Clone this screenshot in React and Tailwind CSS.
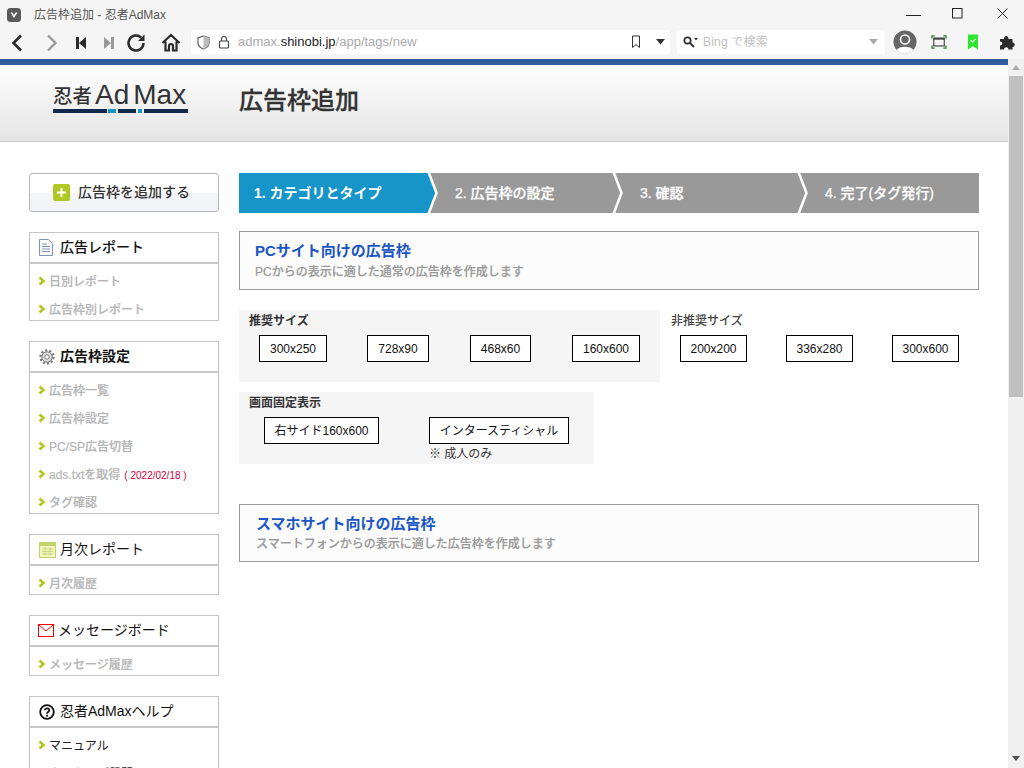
import React from "react";

const sans = "font-['Liberation_Sans','Noto_Sans_CJK_JP',sans-serif]";

function Chev() {
  return <svg className="w-[10px] h-[10px] shrink-0 mt-[-3px]" viewBox="0 0 10 10"><path d="M2.5 1.5 L6.5 5 L2.5 8.5" fill="none" stroke="#b3c61f" strokeWidth="2.6" /></svg>;
}

function SideItem({ children, dark, extra }) {
  return (
    <div className={"h-[28px] flex items-center pt-[8px] pl-[7px] gap-[2px] text-[12px] " + (dark ? "font-normal text-[#222]" : "font-medium text-[#b5b5b5]")}>
      <Chev />
      <span className={dark ? "" : "[-webkit-text-stroke:0.2px]"}>{children}</span>
      {extra}
    </div>
  );
}

function SideBox({ icon, title, weight, tight, children }) {
  return (
    <div className="border border-[#c4c4c4] mb-[20px]">
      <div className="h-[31px] flex items-center pl-[9px] border-b-2 border-[#c8c8c8] text-[14px] text-[#111]">
        <span className={"flex justify-start shrink-0 " + (tight ? "w-[20px] ml-[-1px]" : "w-[21px]")}>{icon}</span>
        <span className={weight || ""}>{title}</span>
      </div>
      <div>{children}</div>
    </div>
  );
}

function SizeBtn({ w, children }) {
  return <div className={"h-[27px] border border-black bg-white flex items-center justify-center text-[12px] text-[#111] " + w}>{children}</div>;
}

function Step({ w, text, active, last }) {
  return (
    <div className={"relative h-[40px] flex items-center pl-[15px] text-[14px] text-white " + w + (active ? " bg-[#1695c9] font-bold" : " font-medium [-webkit-text-stroke:0.25px]")}>
      <span className={active ? "" : "pl-[12px]"}>{text}</span>
      {!last && (
        <svg className="absolute right-[-13px] top-0 w-[14px] h-[40px] z-10" viewBox="0 0 14 40">
          {active && <polygon points="0,0 2,0 10,20 2,40 0,40" fill="#1695c9" />}
          <path d="M1.500 -1 L9.500 20 L1.500 41" fill="none" stroke="#fff" strokeWidth="2.6" />
        </svg>
      )}
    </div>
  );
}

function TopIcon({ children, w = 24 }) {
  return <svg width={w} height="24" viewBox={`0 0 ${w} 24`} className="shrink-0">{children}</svg>;
}

export default function App() {
  return (
    <div className={"w-[1024px] h-[768px] overflow-hidden bg-white relative " + sans}>
      {/* title bar */}
      <div className="h-[29px] bg-[#f5f5f5] flex items-center pl-[7px] relative">
        <svg width="14" height="14" viewBox="0 0 14 14"><rect width="14" height="14" rx="3.5" fill="#5a5a5a" /><path d="M3.5 4.5 L7 10 L10.500 4.5 L8.600 4.5 L7 7 L5.400 4.5 Z" fill="#fff" /></svg>
        <span className="ml-[13px] text-[12px] text-[#555]">広告枠追加 - 忍者AdMax</span>
        <div className="ml-auto flex items-center h-full mt-[-2px]">
          <svg width="15" height="12" viewBox="0 0 15 12" className="mr-[31px]"><path d="M0 7.500H15" stroke="#222" strokeWidth="1" /></svg>
          <svg width="11" height="11" viewBox="0 0 11 11" className="mr-[34px]"><rect x=".5" y=".5" width="9.500" height="9.500" fill="none" stroke="#222" /></svg>
          <svg width="11" height="11" viewBox="0 0 11 11" className="mr-[16px]"><path d="M.5 .5L10.500 10.500M10.500 .5L.5 10.500" stroke="#222" strokeWidth="1" /></svg>
        </div>
      </div>
      {/* toolbar */}
      <div className="h-[30px] bg-[#f5f5f5] pt-[1px]">
        <div className="h-[24px] flex items-center">
          <div className="w-[191px] flex items-center h-full shrink-0">
            <div className="ml-[5px]"><TopIcon><path d="M16 5.500 L8.500 13 L16 20.500" fill="none" stroke="#2b2b2b" strokeWidth="2.600" /></TopIcon></div>
            <div className="ml-[10px]"><TopIcon><path d="M9 5.500 L16.500 13 L9 20.500" fill="none" stroke="#999" strokeWidth="2.400" /></TopIcon></div>
            <div className="ml-[9px]"><TopIcon w={20}><path d="M4 7H7V19H4Z M14 7V19L7 13Z" fill="#2b2b2b" /></TopIcon></div>
            <div className="ml-[6px]"><TopIcon w={20}><path d="M13 7V19H16V7Z M6 7V19L13 13Z" fill="#999" /></TopIcon></div>
            <div className="ml-[6px]"><TopIcon><path d="M19.500 13a7.500 7.500 0 1 1-2.300-5.400" fill="none" stroke="#2b2b2b" strokeWidth="2.500" /><path d="M20.500 4.500V11H14Z" fill="#2b2b2b" /></TopIcon></div>
            <div className="ml-[11px]"><TopIcon><path d="M3.500 13 L12 5 L20.500 13 M6.500 11.500V20.500H10V16A2 2 0 0 1 14 16V20.500H17.500V11.500" fill="none" stroke="#2b2b2b" strokeWidth="2.200" /></TopIcon></div>
          </div>
          <div className="w-[479px] h-[24px] bg-white rounded-[3px] flex items-center shrink-0">
            <svg width="13" height="15" viewBox="0 0 14 16" className="ml-[6px]"><path d="M7 1 L13 3 V8 C13 11.500 10 14 7 15 C4 14 1 11.500 1 8 V3 Z" fill="#fff" stroke="#555" strokeWidth="1.200" /><path d="M7 1 L13 3 V8 C13 11.500 10 14 7 15 Z" fill="#bbb" /></svg>
            <svg width="12" height="14" viewBox="0 0 12 14" className="ml-[8px]"><rect x="1.500" y="6" width="9" height="7" rx="1" fill="none" stroke="#444" strokeWidth="1.100" /><path d="M3.500 6V4a2.500 2.500 0 0 1 5 0V6" fill="none" stroke="#444" strokeWidth="1.100" /></svg>
            <span className="ml-[8px] text-[13px] text-[#aaa]">admax.<span className="text-[#222]">shinobi.jp</span>/app/tags/new</span>
            <svg width="10" height="14" viewBox="0 0 10 14" className="ml-auto mr-[15px]"><path d="M1.500 1H8.500V12.500L5 9.500L1.500 12.500Z" fill="#fff" stroke="#333" strokeWidth="1" /></svg>
            <svg width="9" height="6" viewBox="0 0 9 6" className="mr-[5px]"><path d="M0 0H9L4.500 5.500Z" fill="#333" /></svg>
          </div>
          <div className="ml-[7px] w-[208px] h-[24px] bg-white rounded-[3px] flex items-center shrink-0">
            <svg width="16" height="12" viewBox="0 0 16 12" className="ml-[6px]"><circle cx="4.500" cy="4.500" r="3.200" fill="none" stroke="#333" strokeWidth="1.800" /><path d="M7 7L11 11" stroke="#333" strokeWidth="2" /><path d="M11 2H15L13 4.500Z" fill="#333" /></svg>
            <span className="ml-[4px] text-[12px] tracking-[0.2px] text-[#c0c0c0]">Bing で検索</span>
            <svg width="9" height="6" viewBox="0 0 9 6" className="ml-auto mr-[7px]"><path d="M0 0H9L4.500 5.500Z" fill="#aaa" /></svg>
          </div>
          <svg width="24" height="24" viewBox="0 0 24 24" className="ml-[8px] shrink-0"><circle cx="12" cy="12" r="11.500" fill="#666" /><circle cx="12" cy="9.500" r="4.500" fill="none" stroke="#fff" strokeWidth="1.600" /><path d="M3.500 20C6 15.500 18 15.500 20.500 20A11.500 11.500 0 0 1 3.500 20Z" fill="#fff" /></svg>
          <svg width="16" height="14" viewBox="0 0 18 16" className="ml-[14px] shrink-0"><path d="M1 4V1H4M14 1H17V4M17 12V15H14M4 15H1V12" fill="none" stroke="#2f7d32" strokeWidth="1.500" /><rect x="3" y="3.500" width="12" height="9" fill="none" stroke="#333" strokeWidth="1.200" /><path d="M3 4.500H15" stroke="#333" strokeWidth="1.600" /></svg>
          <svg width="10" height="16" viewBox="0 0 12 18" className="ml-[21px] shrink-0"><path d="M0 0H12V18L6 14L0 18Z" fill="#2ee62e" /><path d="M3 7L5.200 9L9 5.500" fill="none" stroke="#fff" strokeWidth="1.300" /></svg>
          <svg width="16" height="16" viewBox="0 0 16 16" className="ml-[21px] shrink-0"><path d="M1 5H5C5 1 9.500 1 9.500 5H13.500V8.500C16.500 8.500 16.500 13 13.500 13V15.500H9.500C9.500 12.500 5 12.500 5 15.500H1V11.500C4 11.500 4 7.500 1 7.500Z" fill="#2b2b2b" /></svg>
        </div>
      </div>
      {/* page */}
      <div className="h-[709px] relative">
        <div className="h-[6px] w-[1008px] bg-[#2f5a9c]" />
        <div className="h-[77px] w-[1008px] border-b border-[#c8c8c8] bg-gradient-to-b from-white to-[#e4e4e4] flex items-center">
          <div className="ml-[53px] w-[135px] shrink-0 mt-[-14px]">
            <div className="h-[30px] flex items-end leading-none text-[#333] overflow-hidden whitespace-nowrap">
              <span className="text-[19.500px] font-medium leading-[25px]">忍者</span>
              <span className="text-[28px] font-['Liberation_Sans',sans-serif] leading-[28px] ml-[3px]">Ad</span>
              <span className="text-[28px] font-['Liberation_Sans',sans-serif] leading-[28px] ml-[4px]">Max</span>
            </div>
            <div className="flex h-[4px]">
              <div className="w-[54px] bg-[#10284a]" />
              <div className="w-[8px] ml-[1px] bg-[#1695c9]" />
              <div className="w-[18px] ml-[2px] bg-[#10284a]" />
              <div className="w-[4px] ml-[2px] bg-[#1695c9]" />
              <div className="w-[44px] ml-[2px] bg-[#10284a]" />
            </div>
          </div>
          <h1 className="ml-[51px] mt-[-4px] text-[24px] font-medium [-webkit-text-stroke:0.3px] text-[#333]">広告枠追加</h1>
        </div>
        <div className="w-[1008px] flex pl-[29px] pt-[31px]">
          {/* sidebar */}
          <div className="w-[190px] shrink-0">
            <div className="h-[39px] border border-[#b5b5b5] rounded-[3px] mb-[20px] bg-gradient-to-b from-white from-50% to-[#f2f4f8] to-50% flex items-center pl-[23px]">
              <svg width="17" height="17" viewBox="0 0 17 17" className="shrink-0"><rect width="17" height="17" rx="2" fill="#b0c823" /><path d="M8.500 4V13M4 8.500H13" stroke="#fff" strokeWidth="2" /></svg>
              <span className="ml-[8px] text-[14px] font-medium text-[#333]">広告枠を追加する</span>
            </div>
            <SideBox weight="font-medium" title="広告レポート" icon={
              <svg width="14" height="17" viewBox="0 0 14 17"><path d="M.5 .5H9.500L13.500 4.500V16.500H.5Z" fill="#fff" stroke="#7b93b8" /><path d="M3 5H8M3 7.500H11M3 10H11M3 12.500H11" stroke="#7b93b8" /></svg>}>
              <SideItem>日別レポート</SideItem>
              <SideItem>広告枠別レポート</SideItem>
            </SideBox>
            <SideBox weight="font-bold" title="広告枠設定" icon={
              <svg width="16" height="16" viewBox="0 0 16 16"><circle cx="8" cy="8" r="5.200" fill="#ddd" stroke="#777" /><circle cx="8" cy="8" r="2.200" fill="#fff" stroke="#777" /><circle cx="8" cy="8" r="6.600" fill="none" stroke="#777" strokeWidth="2.200" strokeDasharray="2 2.150" /></svg>}>
              <SideItem>広告枠一覧</SideItem>
              <SideItem>広告枠設定</SideItem>
              <SideItem>PC/SP広告切替</SideItem>
              <SideItem extra={<span className="ml-[2px] text-[10px] font-normal text-[#d4003a]">( 2022/02/18 )</span>}>ads.txtを取得</SideItem>
              <SideItem>タグ確認</SideItem>
            </SideBox>
            <SideBox title="月次レポート" icon={
              <svg width="17" height="17" viewBox="0 0 17 17"><rect x=".5" y="1.500" width="16" height="15" fill="#f1f4c0" stroke="#c0d26a" /><path d="M.5 1.500H16.500V5H.5Z" fill="#c0d26a" /><path d="M3 8H14M3 10.500H14M3 13H14M6 6.500V14.500M11 6.500V14.500" stroke="#c0d26a" strokeWidth=".8" /></svg>}>
              <SideItem>月次履歴</SideItem>
            </SideBox>
            <SideBox tight title="メッセージボード" icon={
              <svg width="16" height="13" viewBox="0 0 16 13"><rect x=".5" y=".5" width="15" height="12" fill="#fff" stroke="#f00" /><path d="M1 1L8 7L15 1" fill="none" stroke="#f00" /></svg>}>
              <SideItem>メッセージ履歴</SideItem>
            </SideBox>
            <SideBox title="忍者AdMaxヘルプ" icon={
              <svg width="16" height="16" viewBox="0 0 16 16"><circle cx="8" cy="8" r="6.800" fill="none" stroke="#111" strokeWidth="1.800" /><path d="M5.800 6.300C5.800 3.700 10.300 3.700 10.300 6.300C10.300 8 8 8 8 9.800" fill="none" stroke="#111" strokeWidth="1.700" /><rect x="7.100" y="10.800" width="1.800" height="1.800" fill="#111" /></svg>}>
              <SideItem dark>マニュアル</SideItem>
              <SideItem dark>よくあるご質問</SideItem>
            </SideBox>
          </div>
          {/* content */}
          <div className="ml-[20px] w-[740px] shrink-0">
            <div className="flex bg-[#999] h-[40px]">
              <Step w="w-[189px]" active text="1. カテゴリとタイプ" />
              <Step w="w-[185px]" text="2. 広告枠の設定" />
              <Step w="w-[185px]" text="3. 確認" />
              <Step w="w-[181px]" last text="4. 完了(タグ発行)" />
            </div>
            <div className="mt-[18px] h-[59px] border border-[#999] bg-[#fcfcfc] pl-[15px] pt-[9px]">
              <div className="text-[15px] leading-[20px] font-bold text-[#1a56c4]">PCサイト向けの広告枠</div>
              <div className="text-[12px] leading-[18px] mt-[2px] font-medium [-webkit-text-stroke:0.2px] text-[#999]">PCからの表示に適した通常の広告枠を作成します</div>
            </div>
            <div className="mt-[20px] flex">
              <div className="w-[421px] h-[72px] bg-[#f5f5f5] pl-[10px] pt-[3px] shrink-0">
                <div className="text-[12px] leading-[17px] font-bold text-[#333]">推奨サイズ</div>
                <div className="flex mt-[5px] pl-[10px]">
                  <SizeBtn w="w-[68px]">300x250</SizeBtn>
                  <SizeBtn w="w-[62px] ml-[40px]">728x90</SizeBtn>
                  <SizeBtn w="w-[61px] ml-[41px]">468x60</SizeBtn>
                  <SizeBtn w="w-[68px] ml-[41px]">160x600</SizeBtn>
                </div>
              </div>
              <div className="pl-[11px] pt-[3px]">
                <div className="text-[12px] leading-[17px] font-medium text-[#444]">非推奨サイズ</div>
                <div className="flex mt-[5px] pl-[9px]">
                  <SizeBtn w="w-[67px]">200x200</SizeBtn>
                  <SizeBtn w="w-[67px] ml-[39px]">336x280</SizeBtn>
                  <SizeBtn w="w-[67px] ml-[39px]">300x600</SizeBtn>
                </div>
              </div>
            </div>
            <div className="mt-[10px] w-[355px] h-[72px] bg-[#f5f5f5] pl-[10px] pt-[3px]">
              <div className="text-[12px] leading-[17px] font-bold text-[#333]">画面固定表示</div>
              <div className="flex mt-[5px] pl-[15px]">
                <SizeBtn w="w-[115px]">右サイド160x600</SizeBtn>
                <div className="ml-[50px]">
                  <SizeBtn w="w-[140px]">インタースティシャル</SizeBtn>
                  <div className="text-[12px] leading-[17px] mt-[2px] text-[#333]">※ 成人のみ</div>
                </div>
              </div>
            </div>
            <div className="mt-[40px] h-[58px] border border-[#999] bg-[#fcfcfc] pl-[16px] pt-[9px]">
              <div className="text-[15px] leading-[20px] font-bold text-[#1a56c4]">スマホサイト向けの広告枠</div>
              <div className="text-[12px] leading-[18px] mt-[1px] font-medium [-webkit-text-stroke:0.2px] text-[#999]">スマートフォンからの表示に適した広告枠を作成します</div>
            </div>
          </div>
        </div>
        {/* page scrollbar */}
        <div className="absolute right-0 top-0 bottom-0 w-[16px] bg-[#f0f0f0] flex flex-col items-center">
          <svg width="8" height="5" viewBox="0 0 8 5" className="mt-[6px]"><path d="M4 0L8 5H0Z" fill="#a8a8a8" /></svg>
          <div className="absolute top-[17px] left-[1px] w-[14px] h-[321px] bg-[#c0c0c0]" />
          <svg width="8" height="5" viewBox="0 0 8 5" className="mt-auto mb-[7px]"><path d="M0 0H8L4 5Z" fill="#505050" /></svg>
        </div>
      </div>
    </div>
  );
}
